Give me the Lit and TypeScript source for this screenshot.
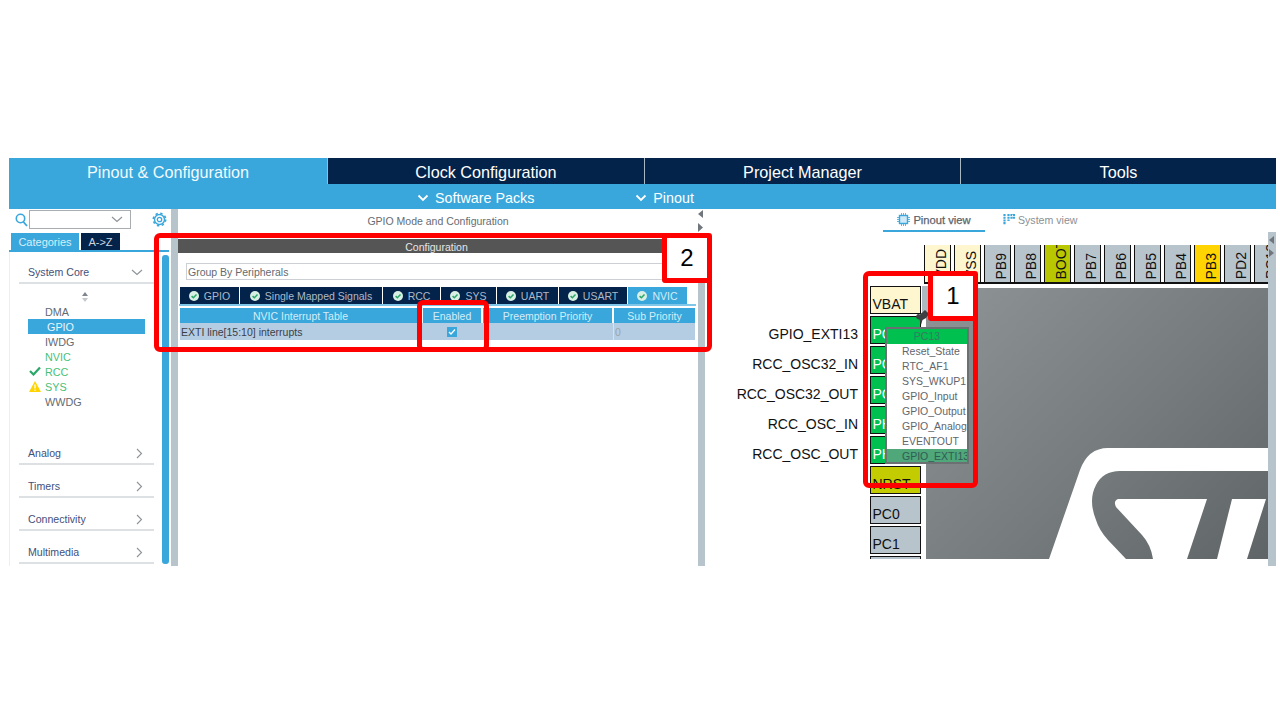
import { LitElement, html, css, svg } from "lit";
import { customElement } from "lit/decorators.js";

const chevDown = (c = "#fff") => html`<svg class="chev" width="12" height="8" viewBox="0 0 12 8"><path d="M1.5 1.5 6 6l4.5-4.5" fill="none" stroke="${c}" stroke-width="1.8"/></svg>`;
const check = html`<svg class="chk" width="10" height="10" viewBox="0 0 10 10"><circle cx="5" cy="5" r="5" fill="#d8efe4"/><path d="M2.6 5.1 4.4 6.8 7.5 3.5" fill="none" stroke="#2aa769" stroke-width="1.5"/></svg>`;
const right = html`<svg width="7" height="11" viewBox="0 0 7 11"><path d="M1 1l4.5 4.5L1 10" fill="none" stroke="#8d9299" stroke-width="1.1"/></svg>`;
const down = html`<svg width="12" height="7" viewBox="0 0 12 7"><path d="M1 1l5 4.5L11 1" fill="none" stroke="#8d9299" stroke-width="1.1"/></svg>`;

@customElement("app-root")
export class AppRoot extends LitElement {
  static styles = css`
    :host { display: block; width: 1280px; height: 720px; background: #fff; font-family: "Liberation Sans", Arial, sans-serif; overflow: hidden; position: relative; }
    .app { margin: 158px 0 0 9px; width: 1267px; height: 408px; display: flex; flex-direction: column; }
    .tabs { display: grid; grid-template-columns: 318px 317px 316px 316px; height: 26px; background: #03234b; font-size: 16.2px; color: #fff; }
    .tabs div { display: flex; align-items: center; justify-content: center; padding-top: 3px; box-sizing: border-box; border-left: 1px solid #a9b6c4; }
    .tabs .on { background: #39a7dc; border: 0; padding-top: 3px; color: #f2fafd; }
    .sub { height: 25px; background: #39a7dc; color: #fff; font-size: 14.3px; display: flex; box-sizing: border-box; padding: 2px 0 0 408px; align-items: center; }
    .sub span { display: flex; align-items: center; gap: 6px; }
    .sub span + span { margin-left: 101px; }
    .main { flex: 1; display: flex; min-height: 0; }

    .left { width: 162px; display: flex; flex-direction: column; box-sizing: border-box; }
    .search { height: 24px; box-sizing: border-box; display: flex; align-items: center; padding: 0 0 3px 6px; gap: 1px; flex: none; }
    .combo { width: 102px; height: 19px; box-sizing: border-box; border: 1px solid #a8adb2; display: flex; align-items: center; justify-content: flex-end; padding-right: 7px; }
    .gear { margin-left: 20px; }
    .cat { display: flex; height: 17px; padding-left: 2px; gap: 2px; font-size: 11px; border-bottom: 2px solid #39a7dc; flex: none; width: 158px; }
    .cat div { display: flex; align-items: center; justify-content: center; }
    .cat .a { width: 68px; background: #39a7dc; color: #d8eef8; }
    .cat .b { width: 39px; background: #03234b; color: #cfd6df; }
    .lbody { flex: 1; display: flex; min-height: 0; }
    .list { width: 153px; box-sizing: border-box; padding: 0 0 0 9px; border-left: 1px solid #eceef4; }
    .group { height: 14px; border-bottom: 2px solid #dde1e4; font-size: 10.6px; color: #43507a; display: flex; justify-content: space-between; align-items: center; padding: 0 11px 3px 9px; width: 115px; }
    .group.first { margin-top: 13px; }
    .group.g1 { margin-top: 37px; }
    .group.g { margin-top: 14px; }
    .sort { display: flex; justify-content: center; width: 131px; margin-top: 8px; height: 12px; }
    .items { margin-left: 9px; font-size: 10.8px; color: #636a72; }
    .it { height: 15px; display: flex; align-items: center; padding-left: 17px; width: 100px; position: relative; }
    .it.sel { background: #39a7dc; color: #eaf6fb; padding-left: 19px; width: 98px; }
    .it.gr { color: #48bf78; }
    .it svg { position: absolute; left: 1px; top: 2px; }
    .scroll { width: 7px; margin: 3px 0 2px 0; background: #39a7dc; border-radius: 3px; }
    .gut { width: 7px; background: #b8c4cc; flex: none; }

    .mid { width: 520px; flex: none; display: flex; flex-direction: column; }
    .mtitle { height: 30px; display: flex; align-items: center; justify-content: center; font-size: 10.5px; color: #666c72; padding: 0 0 6px 0; box-sizing: border-box; }
    .confbar { height: 14px; width: 517px; background: #555; color: #e6e6e6; font-size: 10.5px; display: flex; align-items: center; justify-content: center; margin-bottom: 10px; box-sizing: border-box; padding-top: 1px; }
    .select { margin-left: 8px; width: 500px; height: 17px; box-sizing: border-box; border: 1px solid #ccd0d4; color: #646a70; font-size: 10.5px; display: flex; align-items: center; padding: 0 0 0 1px; }
    .ptabs { display: flex; margin: 7px 0 0 2px; height: 17px; font-size: 10.5px; color: #aeb9c6; gap: 1px; }
    .ptabs div { background: #03234b; display: flex; align-items: center; justify-content: center; gap: 5px; box-sizing: border-box; }
    .ptabs .on { background: #39a7dc; color: #d4edf8; }
    .ptabs-line { height: 2px; width: 517px; margin-left: 1px; background: #7fc6e8; }
    .thead, .trow { display: grid; grid-template-columns: 241px 58px 129px 81px; column-gap: 2px; margin-left: 2px; width: 515px; font-size: 10.5px; }
    .thead { margin-top: 2px; height: 15px; color: #d4edf8; }
    .thead div { background: #39a7dc; display: flex; align-items: center; justify-content: center; }
    .trow { height: 17px; background: #b5cde3; color: #4b5058; align-items: center; }
    .trow .n { padding-left: 1px; white-space: nowrap; color: #3c4046; }
    .trow .c { display: flex; justify-content: center; }
    .box { width: 10px; height: 10px; background: #39a7dc; display: flex; align-items: center; justify-content: center; }
    .trow .z { color: #98a4ae; border-left: 1px solid #d6e2ee; padding-left: 1px; height: 17px; display: flex; align-items: center; margin-left: -1px; }

    .split { width: 7px; flex: none; position: relative; background: linear-gradient(#fff 0, #fff 24px, #b8c4cc 24px); }
    .split svg { display: block; position: absolute; left: 0; top: 0; }

    .rightp { flex: 1; display: flex; flex-direction: column; min-width: 0; }
    .views { height: 23px; flex: none; display: flex; font-size: 11px; color: #8b9096; padding-left: 178px; box-sizing: border-box; }
    .v1, .v2 { display: flex; align-items: center; gap: 3px; height: 21px; }
    .v1 { width: 102px; justify-content: center; border-bottom: 2px solid #39a7dc; color: #5d646b; font-size: 11.2px; -webkit-text-stroke: 0.25px #5d646b; }
    .v2 { margin-left: 18px; font-size: 10.6px; }
    .crow { flex: 1; display: flex; min-height: 0; }
    .canvas { width: 564px; height: 327px; position: relative; overflow: hidden; }
    .rgut { width: 7px; flex: 1; background: #b8c4cc; position: relative; margin-left: -1px; }
    .rgut svg { position: absolute; left: 0; top: 4px; }

    .chip { position: absolute; left: 221px; top: 56px; width: 343px; height: 271px; background: linear-gradient(135deg, #8f9597 0%, #767c7e 55%, #5f6567 100%); }
    .chip svg { display: block; }
    .tpins { position: absolute; left: 219px; top: 13px; display: flex; gap: 3px; border-bottom: 2px solid #111; padding-right: 20px; }
    .tp { width: 27px; height: 37px; box-sizing: border-box; border: 1px solid #111; border-width: 0 1px; background: #b8c4cc; color: #111; display: flex; justify-content: center; align-items: flex-end; overflow: hidden; font-size: 14px; flex: none; padding-left: 7px; }
    .tp span { writing-mode: vertical-rl; transform: rotate(180deg); padding-top: 3px; white-space: nowrap; line-height: 1; }
    .tp.y { background: #fef6cf; } .tp.b { background: #b8c700; } .tp.o { background: #ffd400; }
    .lpins { position: absolute; left: 165px; top: 54px; display: flex; flex-direction: column; gap: 2px; }
    .lp { width: 51px; height: 28px; box-sizing: border-box; border: 1.5px solid #111; background: #b8c4cc; color: #111; font-size: 14px; display: flex; align-items: flex-end; padding: 0 0 1px 1.5px; line-height: 1.1; overflow: hidden; }
    .lp.y { background: #fef6cf; } .lp.g { background: #00c050; color: #fff; } .lp.n { background: #c3cc00; }
    .sig { position: absolute; right: 411px; font-size: 14px; color: #111; line-height: 16px; white-space: nowrap; }
    .sliver { position: absolute; left: 217px; top: 54px; width: 6px; height: 26px; background: #aeb8bf; }
    .pushpin { position: absolute; left: 210px; top: 78px; }
    .popup { position: absolute; left: 180px; top: 95px; width: 84px; height: 137px; box-sizing: border-box; border: 2px solid #6b7173; background: #fff; font-size: 10.5px; color: #5f666c; overflow: hidden; }
    .popup .h { height: 15px; background: #00c050; color: #3a7a60; text-align: center; line-height: 15px; }
    .popup .i { height: 15px; line-height: 15px; padding-left: 15px; white-space: nowrap; }
    .popup .i.s { background: #4fa77a; color: #2e5c55; height: 14px; line-height: 14px; }

    .rbox { position: absolute; box-sizing: border-box; border: 5.5px solid #f00; border-radius: 6px; }
    .b1 { left: 863px; top: 271px; width: 115px; height: 217px; }
    .b2 { left: 154px; top: 233px; width: 558px; height: 119px; }
    .b3 { left: 417px; top: 300px; width: 72px; height: 52px; }
    .lab { position: absolute; box-sizing: border-box; background: #fff; border: 5.5px solid #f00; border-radius: 3px; color: #000; font-size: 24px; display: flex; align-items: center; justify-content: center; }
    .l1 { left: 928px; top: 271px; width: 50px; height: 50px; }
    .l2 { left: 662px; top: 233px; width: 50px; height: 50px; }
  `;

  render() {
    const top = [["VDD","y"],["VSS","y"],["PB9",""],["PB8",""],["BOOT0","b"],["PB7",""],["PB6",""],["PB5",""],["PB4",""],["PB3","o"],["PD2",""],["PC12",""]];
    const left = [["VBAT","y"],["PC13","g"],["PC14","g"],["PC15","g"],["PH0","g"],["PH1","g"],["NRST","n"],["PC0",""],["PC1",""],["",""]];
    const sigs = [["GPIO_EXTI13",94],["RCC_OSC32_IN",124],["RCC_OSC32_OUT",154],["RCC_OSC_IN",184],["RCC_OSC_OUT",214]] as const;
    const ptabs = [["GPIO",59],["Single Mapped Signals",142],["RCC",57],["SYS",55],["UART",61],["USART",68],["NVIC",59]] as const;
    const tri = (d: string, y: number) => svg`<path transform="translate(0 ${y})" d="${d}" fill="#70767c"/>`;
    return html`
      <div class="app">
        <div class="tabs"><div class="on">Pinout &amp; Configuration</div><div>Clock Configuration</div><div>Project Manager</div><div>Tools</div></div>
        <div class="sub"><span>${chevDown()}Software Packs</span><span>${chevDown()}Pinout</span></div>
        <div class="main">
          <div class="left">
            <div class="search">
              <svg width="13" height="14" viewBox="0 0 13 14"><circle cx="5.5" cy="5.5" r="4.2" fill="none" stroke="#39a7dc" stroke-width="1.6"/><path d="M8.5 9l3.5 4" stroke="#39a7dc" stroke-width="1.8"/></svg>
              <div class="combo">${down}</div>
              <svg class="gear" width="15" height="15" viewBox="0 0 15 15"><circle cx="7.5" cy="7.5" r="2.2" fill="none" stroke="#39a7dc" stroke-width="1.3"/><circle cx="7.5" cy="7.5" r="5" fill="none" stroke="#39a7dc" stroke-width="1.4"/><circle cx="7.5" cy="7.5" r="6.2" fill="none" stroke="#39a7dc" stroke-width="1.6" stroke-dasharray="2.4 2.47"/></svg>
            </div>
            <div class="cat"><div class="a">Categories</div><div class="b">A-&gt;Z</div></div>
            <div class="lbody">
              <div class="list">
                <div class="group first"><span>System Core</span>${down}</div>
                <div class="sort"><svg width="8" height="10" viewBox="0 0 8 10"><path d="M4 0l3 4H1z" fill="#80868c"/><path d="M4 10l3-4H1z" fill="#c4c8cc"/></svg></div>
                <div class="items">
                  <div class="it">DMA</div>
                  <div class="it sel">GPIO</div>
                  <div class="it">IWDG</div>
                  <div class="it gr">NVIC</div>
                  <div class="it gr"><svg width="12" height="10" viewBox="0 0 12 10"><path d="M1 5l3.5 3.5L11 1.5" fill="none" stroke="#2aa769" stroke-width="2.2"/></svg>RCC</div>
                  <div class="it gr"><svg width="12" height="11" viewBox="0 0 12 11"><path d="M6 0l6 11H0z" fill="#ffd400"/><path d="M6 3.5v4M6 8.5v1.3" stroke="#fff" stroke-width="1.3"/></svg>SYS</div>
                  <div class="it">WWDG</div>
                </div>
                <div class="group g1"><span>Analog</span>${right}</div>
                <div class="group g"><span>Timers</span>${right}</div>
                <div class="group g"><span>Connectivity</span>${right}</div>
                <div class="group g"><span>Multimedia</span>${right}</div>
              </div>
              <div class="scroll"></div>
            </div>
          </div>
          <div class="gut"></div>
          <div class="mid">
            <div class="mtitle">GPIO Mode and Configuration</div>
            <div class="confbar">Configuration</div>
            <div class="select">Group By Peripherals</div>
            <div class="ptabs">${ptabs.map(([t, w], i) => html`<div class="${i === 6 ? "on" : ""}" style="width:${w}px">${check}${t}</div>`)}</div>
            <div class="ptabs-line"></div>
            <div class="thead"><div>NVIC Interrupt Table</div><div>Enabled</div><div>Preemption Priority</div><div>Sub Priority</div></div>
            <div class="trow">
              <div class="n">EXTI line[15:10] interrupts</div>
              <div class="c"><div class="box"><svg width="8" height="8" viewBox="0 0 8 8"><path d="M1 4l2 2 4-4.5" fill="none" stroke="#fff" stroke-width="1.3"/></svg></div></div>
              <div></div>
              <div class="z">0</div>
            </div>
          </div>
          <div class="split"><svg width="6" height="24" viewBox="0 0 6 24">${tri("M5 0v8L0 4z", 1)}${tri("M0 0v9l5-4.5z", 14)}</svg></div>
          <div class="rightp">
            <div class="views">
              <div class="v1"><svg width="13" height="13" viewBox="0 0 13 13"><rect x="2.5" y="2.5" width="8" height="8" fill="#cfe9f6" stroke="#39a7dc" stroke-width="1.4"/><path d="M4.5 0v13M6.5 0v13M8.5 0v13M0 4.5h13M0 6.5h13M0 8.5h13" stroke="#39a7dc" stroke-width=".8" stroke-dasharray="2 9 2"/></svg>Pinout view</div>
              <div class="v2"><svg width="12" height="11" viewBox="0 0 12 11"><path d="M1.5 0v11M5.5 0v7M8.5 0v5M11 0v5" stroke="#39a7dc" stroke-width="2.2" stroke-dasharray="2 .7"/></svg>System view</div>
            </div>
            <div class="crow">
              <div class="canvas">
                <div class="tpins">${top.map(([t, c]) => html`<div class="tp ${c}"><span>${t}</span></div>`)}</div>
                <div class="chip"><svg width="343" height="271" viewBox="926 288 343 271"><path fill="#fff" d="M1049 559 1080 470Q1088 448 1108 448H1269V471H1120Q1103 471 1096 485 1088 500 1096 520Q1099 530 1108 540L1126 559ZM1118 499H1207L1187 559H1153Q1151 545 1142 535L1116 507Q1113 501 1118 499ZM1232 499H1266L1247 559H1217Z"/></svg></div>
                ${sigs.map(([t, y]) => html`<div class="sig" style="top:${y}px">${t}</div>`)}
                <div class="sliver"></div>
                <div class="lpins">${left.map(([t, c]) => html`<div class="lp ${c}">${t}</div>`)}</div>
                <svg class="pushpin" width="15" height="15" viewBox="0 0 15 15"><path d="M1 6.5Q2 3 5 4.5L10 0l4 4-3 4-3.5 2L6 15 4.5 9.5Q1 9 1 6.5z" fill="#3c4042"/></svg>
                <div class="popup">
                  <div class="h">PC13</div>
                  ${["Reset_State","RTC_AF1","SYS_WKUP1","GPIO_Input","GPIO_Output","GPIO_Analog","EVENTOUT"].map(t => html`<div class="i">${t}</div>`)}
                  <div class="i s">GPIO_EXTI13</div>
                </div>
              </div>
              <div class="rgut"><svg width="7" height="24" viewBox="0 0 7 24">${tri("M6 0v8L1 4z", 0)}${tri("M1 0v8l5-4z", 13)}</svg></div>
            </div>
          </div>
        </div>
      </div>
      <div class="rbox b1"></div>
      <div class="rbox b2"></div>
      <div class="rbox b3"></div>
      <div class="lab l1">1</div>
      <div class="lab l2">2</div>
    `;
  }
}
